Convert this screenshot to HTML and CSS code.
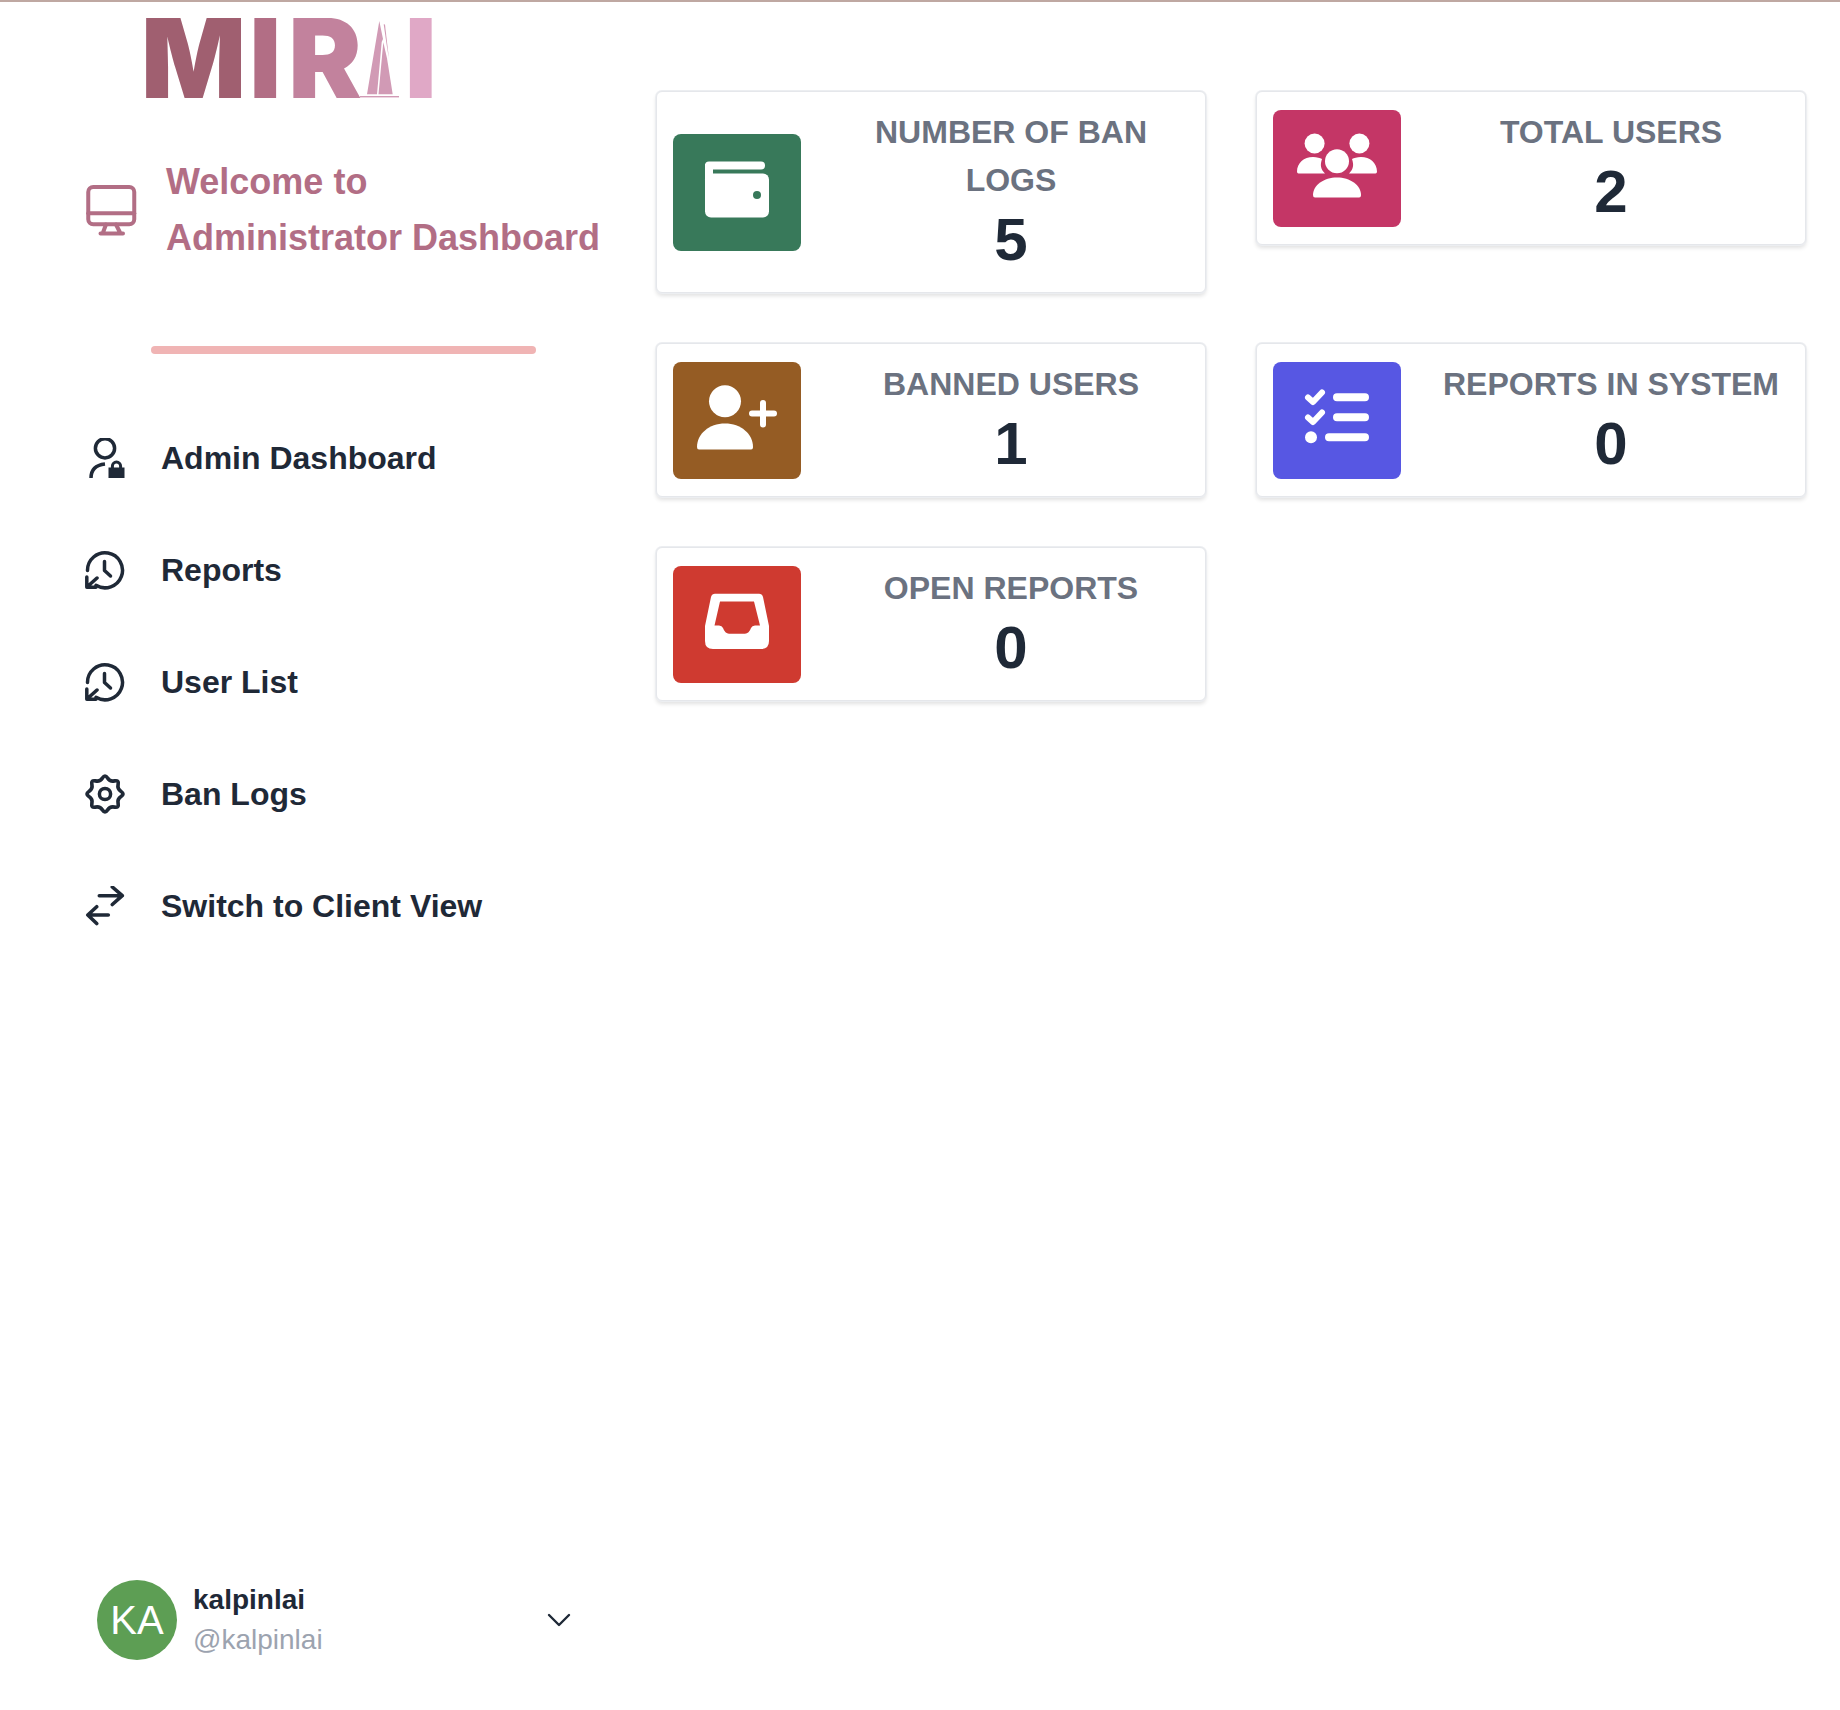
FILE: index.html
```html
<!DOCTYPE html>
<html lang="en">
<head>
    <meta charset="UTF-8">
    <meta name="viewport" content="width=device-width, initial-scale=1.0">
    <title>Administrator Dashboard</title>
    <link rel="stylesheet" href="styles.css">
</head>
<body>
    <div class="page">
        <aside class="sidebar">
            <div class="logo">
                <span class="logo-m">M</span>
                <span class="logo-i">I</span>
                <span class="logo-r">R</span>
                <svg class="logo-tower" viewBox="0 0 42 80">
                    <path d="M20.3 3 8 76.3H18L22.7 24 24 21Z"/>
                    <path d="M19.5 76.3 24.3 24.3 28 40.3 33.7 76.3Z"/>
                    <path d="M24.7 6.3 26 6.5 30 41 27.5 26Z"/>
                    <rect x="1" y="78" width="39" height="1.4"/>
                </svg>
                <span class="logo-i2">I</span>
            </div>

            <div class="welcome">
                <svg class="welcome-icon" viewBox="0 0 56 56" fill="none" stroke="currentColor" stroke-width="4" stroke-linecap="round" stroke-linejoin="round">
                    <rect x="5.25" y="5" width="46" height="37.2" rx="5"/>
                    <path d="M5.25 31.3H51.25"/>
                    <path d="M23 42.5 20 50.5M33 42.5 37 50.5M17.5 51.5H40"/>
                </svg>
                <h1 class="welcome-text">Welcome to<br>Administrator Dashboard</h1>
            </div>

            <div class="divider"></div>

            <nav class="nav">
                <a class="nav-item">
                    <svg class="nav-icon" viewBox="0 0 40 40" fill="none" stroke="currentColor" stroke-width="3.5">
                        <circle cx="20" cy="10.3" r="9.6"/>
                        <path d="M6 40C6 32 11 27 20 26"/>
                        <rect x="23.5" y="29.5" width="16" height="10.5" fill="currentColor" stroke="none"/>
                        <path d="M27.4 31V28.2A4.1 4.1 0 0 1 35.6 28.2V31" stroke-width="3"/>
                    </svg>
                    <span>Admin Dashboard</span>
                </a>
                <a class="nav-item">
                    <svg class="nav-icon" viewBox="0 0 40 40" fill="none" stroke="currentColor" stroke-width="3.5" stroke-linecap="round" stroke-linejoin="round">
                        <path d="M2.5 20.5A17.5 17.5 0 1 1 11 35.3"/>
                        <path d="M1.8 27V37.3H11M2 37 12 28"/>
                        <path d="M19.5 11.5V20.5L25.5 26"/>
                    </svg>
                    <span>Reports</span>
                </a>
                <a class="nav-item">
                    <svg class="nav-icon" viewBox="0 0 40 40" fill="none" stroke="currentColor" stroke-width="3.5" stroke-linecap="round" stroke-linejoin="round">
                        <path d="M2.5 20.5A17.5 17.5 0 1 1 11 35.3"/>
                        <path d="M1.8 27V37.3H11M2 37 12 28"/>
                        <path d="M19.5 11.5V20.5L25.5 26"/>
                    </svg>
                    <span>User List</span>
                </a>
                <a class="nav-item">
                    <svg class="nav-icon" viewBox="0 0 40 40" fill="none" stroke="currentColor" stroke-width="3.5" stroke-linejoin="round">
                        <path transform="translate(-1 -1) scale(1.05)" d="M17.6 4.7Q20 1 22.4 4.7 24.8 8.45 29.1 7.5 33.4 6.6 32.5 10.9 31.55 15.2 35.3 17.6 39 20 35.3 22.4 31.55 24.8 32.5 29.1 33.4 33.4 29.1 32.5 24.8 31.55 22.4 35.3 20 39 17.6 35.3 15.2 31.55 10.9 32.5 6.6 33.4 7.5 29.1 8.45 24.8 4.7 22.4 1 20 4.7 17.6 8.45 15.2 7.5 10.9 6.6 6.6 10.9 7.5 15.2 8.45 17.6 4.7Z"/>
                        <circle cx="20" cy="20" r="5.6"/>
                    </svg>
                    <span>Ban Logs</span>
                </a>
                <a class="nav-item">
                    <svg class="nav-icon" viewBox="0 0 40 40" fill="none" stroke="currentColor" stroke-width="3.6" stroke-linecap="round" stroke-linejoin="round">
                        <path d="M14.3 9.7H37.3M27.3 1 37.3 9.7 27.3 18.5"/>
                        <path d="M23.3 29H2.8M11.7 20.7 2.8 29 11.7 37.5"/>
                    </svg>
                    <span>Switch to Client View</span>
                </a>
            </nav>

            <div class="user">
                <div class="avatar">KA</div>
                <div class="user-text">
                    <div class="user-name">kalpinlai</div>
                    <div class="user-handle">@kalpinlai</div>
                </div>
                <svg class="chevron" viewBox="0 0 24 14" fill="none" stroke="currentColor" stroke-width="2.4" stroke-linecap="round" stroke-linejoin="round">
                    <path d="M2 2 12 12 22 2"/>
                </svg>
            </div>
        </aside>

        <main class="stats">
            <div class="card">
                <div class="tile tile-green">
                    <svg viewBox="0 0 96 96">
                        <rect x="16" y="17.5" width="60" height="8" rx="4" fill="#fff"/>
                        <rect x="16" y="20" width="8" height="30" fill="#fff"/>
                        <rect x="16" y="29.5" width="64" height="44" rx="6" fill="#fff"/>
                        <circle cx="68" cy="51" r="4" fill="#38795a"/>
                    </svg>
                </div>
                <div class="card-text">
                    <div class="card-label">NUMBER OF BAN LOGS</div>
                    <div class="card-value">5</div>
                </div>
            </div>

            <div class="card">
                <div class="tile tile-pink">
                    <svg viewBox="0 0 96 96" fill="#fff">
                        <ellipse cx="25.6" cy="23.5" rx="10" ry="10"/>
                        <ellipse cx="70.4" cy="23.5" rx="10" ry="10"/>
                        <ellipse cx="48" cy="41.2" rx="12" ry="12"/>
                        <path d="M9.5 53.5Q8 53.5 8 51.5C8 43 15 37 24 37 28 37 31 38 33 39 31 45 31.5 49 36 53.5Z"/>
                        <path d="M86.5 53.5Q88 53.5 88 51.5C88 43 81 37 72 37 68 37 65 38 63 39 65 45 64.5 49 60 53.5Z"/>
                        <path d="M26 77.5Q24 77.5 24 75C24 65 35 57.5 48 57.5 61 57.5 72 65 72 75 72 77.5 70 77.5 70 77.5Z"/>
                    </svg>
                </div>
                <div class="card-text">
                    <div class="card-label">TOTAL USERS</div>
                    <div class="card-value">2</div>
                </div>
            </div>

            <div class="card">
                <div class="tile tile-brown">
                    <svg viewBox="0 0 96 96" fill="#fff">
                        <ellipse cx="36" cy="29.2" rx="16" ry="16"/>
                        <path d="M10 77.5Q8 77.5 8 75C8 62 20 51.5 36 51.5 52 51.5 64 62 64 75 64 77.5 62 77.5 62 77.5Z"/>
                        <path d="M63 41.5H85M74 31V52.5" fill="none" stroke="#fff" stroke-width="6" stroke-linecap="round"/>
                    </svg>
                </div>
                <div class="card-text">
                    <div class="card-label">BANNED USERS</div>
                    <div class="card-value">1</div>
                </div>
            </div>

            <div class="card">
                <div class="tile tile-indigo">
                    <svg viewBox="0 0 96 96" fill="none" stroke="#fff" stroke-linecap="round" stroke-linejoin="round">
                        <path d="M19 25.5 24 30 33 20.5M19 45.5 24 50 33 40.5" stroke-width="6"/>
                        <path d="M48 25.2H76M48 45.2H76M40 65.2H76" stroke-width="8"/>
                        <circle cx="22" cy="65.2" r="6" fill="#fff" stroke="none"/>
                    </svg>
                </div>
                <div class="card-text">
                    <div class="card-label">REPORTS IN SYSTEM</div>
                    <div class="card-value">0</div>
                </div>
            </div>

            <div class="card">
                <div class="tile tile-red">
                    <svg viewBox="0 0 96 96">
                        <path fill="#fff" fill-rule="evenodd" d="M26 17.7H70Q73 17.7 74 21L80 50V65Q80 73 72 73H24Q16 73 16 65V50L22 21Q23 17.7 26 17.7ZM31 25.4 25.5 49.4H30Q33 49.4 34 52 36 57.7 40 57.7H56Q60 57.7 62 52 63 49.4 66 49.4H71L65 25.4Z"/>
                    </svg>
                </div>
                <div class="card-text">
                    <div class="card-label">OPEN REPORTS</div>
                    <div class="card-value">0</div>
                </div>
            </div>
        </main>
    </div>
</body>
</html>
```

FILE: styles.css
```css
body {
    margin: 0;
    background-color: #fff;
    color: #1f2937;
    font-family: "Liberation Sans", Arial, sans-serif;
}
.page {
    display: flex;
    height: 1708px;
    border-top: 2px solid #bfa8a2;
}
.sidebar {
    display: flex;
    flex-direction: column;
    width: 640px;
    flex-shrink: 0;
}
.logo {
    display: flex;
    align-items: center;
    height: 110px;
    margin-top: 1px;
    padding-left: 141px;
    font-family: Inter, "Liberation Sans", sans-serif;
    font-size: 110px;
    font-weight: 900;
    line-height: 110px;
}
.logo-m { color: #a05f70; }
.logo-i { color: #b26e85; margin-left: 3px; }
.logo-r { color: #c2829d; margin-left: 7px; }
.logo-i2 { color: #e0a8c6; margin-left: 4px; }
.logo-tower {
    width: 42px;
    height: 80px;
    margin-left: -3px;
    fill: #d19ab5;
}
.welcome {
    display: flex;
    align-items: center;
    margin-top: 41px;
    padding-left: 83px;
    color: #b26e85;
}
.welcome-icon {
    width: 56px;
    height: 56px;
    margin-right: 27px;
}
.welcome-text {
    margin: 0;
    font-size: 36px;
    font-weight: 700;
    line-height: 55.5px;
}
.divider {
    width: 385px;
    height: 8px;
    margin: 81px 0 0 151px;
    border-radius: 4px;
    background-color: #f0b4b4;
}
.nav {
    display: flex;
    flex-direction: column;
    margin-top: 48px;
    padding-left: 85px;
}
.nav-item {
    display: flex;
    align-items: center;
    gap: 36px;
    height: 112px;
    font-size: 32px;
    font-weight: 700;
}
.nav-icon {
    width: 40px;
    height: 40px;
}
.user {
    display: flex;
    align-items: center;
    width: 474px;
    margin: auto 0 50px 97px;
}
.avatar {
    display: flex;
    align-items: center;
    justify-content: center;
    width: 80px;
    height: 80px;
    border-radius: 50%;
    background-color: #5d9e54;
    color: #fff;
    font-size: 40px;
}
.user-text {
    margin-left: 16px;
    font-size: 28px;
    line-height: 40px;
}
.user-name {
    font-weight: 700;
}
.user-handle {
    color: #9ca3af;
}
.chevron {
    width: 24px;
    height: 14px;
    margin-left: auto;
}
.stats {
    display: grid;
    grid-template-columns: 550px 550px;
    gap: 50px;
    align-items: start;
    align-content: start;
    padding: 89px 0 0 16px;
}
.card {
    display: flex;
    align-items: center;
    box-sizing: border-box;
    padding: 15px 16px;
    border: 1px solid #e5e7eb;
    border-radius: 6px;
    background-color: #fff;
    box-shadow: 0 0 0 1px #eceef1, 0 3px 4px rgba(0, 0, 0, 0.12);
}
.tile {
    display: flex;
    align-items: center;
    justify-content: center;
    flex-shrink: 0;
    width: 128px;
    height: 117px;
    border-radius: 8px;
}
.tile svg {
    width: 96px;
    height: 96px;
}
.tile-green { background-color: #38795a; }
.tile-pink { background-color: #c43666; }
.tile-brown { background-color: #955c24; }
.tile-indigo { background-color: #5757e3; }
.tile-red { background-color: #cf3a30; }
.card-text {
    flex: 1;
    margin-left: 32px;
    text-align: center;
}
.card-label {
    padding-top: 1px;
    color: #6b7280;
    font-size: 32px;
    font-weight: 700;
    line-height: 48px;
}
.card-value {
    margin-bottom: 2px;
    font-size: 60px;
    font-weight: 700;
    line-height: 71px;
}
```
